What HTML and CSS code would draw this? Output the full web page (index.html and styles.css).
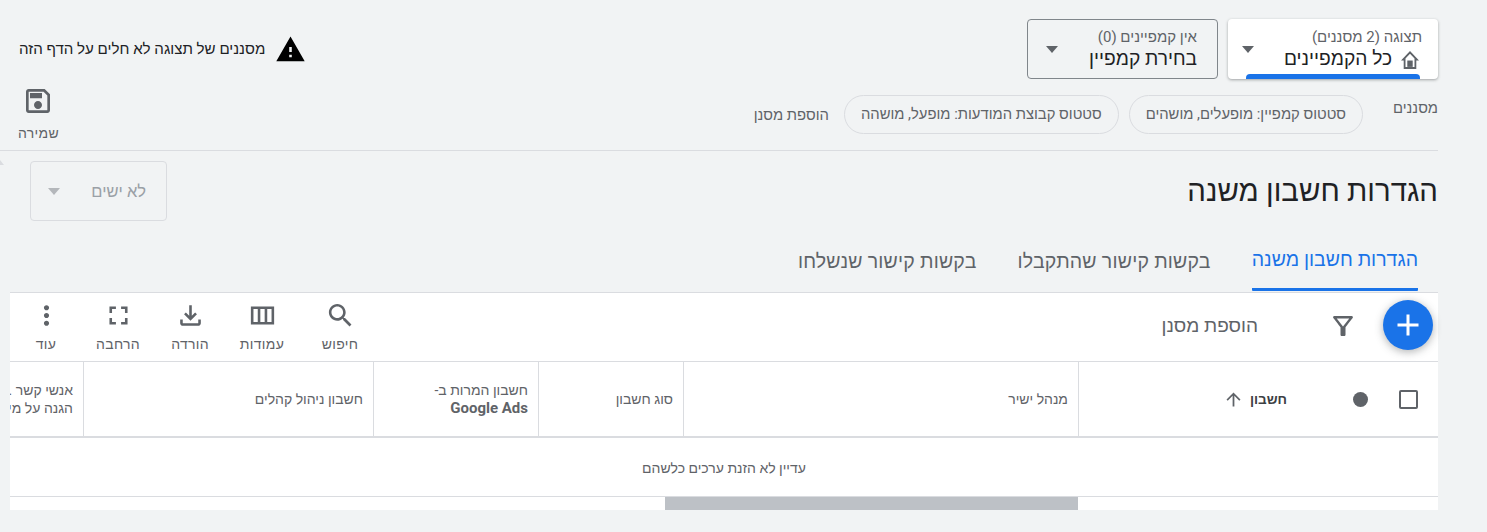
FILE: index.html
```html
<!DOCTYPE html>
<html lang="he" dir="rtl">
<head>
    <meta charset="UTF-8">
    <title>הגדרות חשבון משנה</title>
    <link rel="stylesheet" href="styles.css">
</head>
<body>
    <div class="page">
        <div class="picker-row">
            <div class="picker picker-active">
                <div class="picker-text">
                    <div class="picker-label">תצוגה (2 מסננים)</div>
                    <div class="picker-value">
                        <svg class="home-icon" viewBox="2 3 20 17" preserveAspectRatio="none"><path d="M12 3L2 12h3v8h14v-8h3L12 3zm5 15H7v-7.81l5-4.5 5 4.5V18z"/><rect x="9" y="12" width="6" height="6"/></svg>
                        כל הקמפיינים
                    </div>
                </div>
                <span class="caret"></span>
                <span class="picker-bar"></span>
            </div>
            <div class="picker picker-outline">
                <div class="picker-text">
                    <div class="picker-label">אין קמפיינים (0)</div>
                    <div class="picker-value">בחירת קמפיין</div>
                </div>
                <span class="caret"></span>
            </div>
            <div class="warning">
                <svg class="warning-icon" viewBox="0 0 24 24"><path d="M1 21h22L12 2 1 21zm12-3h-2v-2h2v2zm0-4h-2v-4h2v4z"/></svg>
                <span>מסננים של תצוגה לא חלים על הדף הזה</span>
            </div>
        </div>

        <div class="filter-row">
            <span class="filter-title">מסננים</span>
            <span class="chip">סטטוס קמפיין: מופעלים, מושהים</span>
            <span class="chip">סטטוס קבוצת המודעות: מופעל, מושהה</span>
            <span class="add-filter">הוספת מסנן</span>
            <div class="save">
                <svg class="save-icon" viewBox="0 0 24 24"><path d="M17 3H5c-1.11 0-2 .9-2 2v14c0 1.1.89 2 2 2h14c1.1 0 2-.9 2-2V7l-4-4zm2 16H5V5h11.17L19 7.83V19zm-7-7c-1.66 0-3 1.34-3 3s1.34 3 3 3 3-1.34 3-3-1.34-3-3-3zM6 6h9v4H6z"/></svg>
                <span>שמירה</span>
            </div>
        </div>

        <div class="title-row">
            <span class="corner"></span>
            <h1>הגדרות חשבון משנה</h1>
            <div class="na-select">
                <span>לא ישים</span>
                <span class="caret"></span>
            </div>
        </div>

        <div class="tabs">
            <span class="tab tab-active">הגדרות חשבון משנה</span>
            <span class="tab tab-wide">בקשות קישור שהתקבלו</span>
            <span class="tab tab-wide">בקשות קישור שנשלחו</span>
        </div>

        <div class="table-card">
            <div class="toolbar">
                <button class="fab"><svg viewBox="0 0 24 24"><path d="M19 13h-6v6h-2v-6H5v-2h6V5h2v6h6v2z"/></svg></button>
                <svg class="filter-icon" viewBox="0 0 24 24"><path d="M7 6h10l-5.01 6.3L7 6zm-2.75-.39C6.27 8.2 10 13 10 13v6c0 .55.45 1 1 1h2c.55 0 1-.45 1-1v-6s3.72-4.8 5.74-7.39C20.25 4.95 19.78 4 18.95 4H5.04c-.83 0-1.3.95-.79 1.61z"/></svg>
                <span class="toolbar-filter">הוספת מסנן</span>
                <div class="tools">
                    <div class="tool tool-search">
                        <svg class="icon" viewBox="0 0 24 24"><path d="M15.5 14h-.79l-.28-.27C15.41 12.59 16 11.11 16 9.5 16 5.91 13.09 3 9.5 3S3 5.91 3 9.5 5.91 16 9.5 16c1.61 0 3.09-.59 4.23-1.57l.27.28v.79l5 4.99L20.49 19l-4.99-5zm-6 0C7.01 14 5 11.99 5 9.5S7.01 5 9.5 5 14 7.01 14 9.5 11.99 14 9.5 14z"/></svg>
                        <span>חיפוש</span>
                    </div>
                    <div class="tool">
                        <svg class="icon" viewBox="0 0 24 24"><path d="M3 5v14h18V5H3zm5.33 12H5V7h3.33v10zm5.34 0h-3.34V7h3.34v10zM19 17h-3.33V7H19v10z"/></svg>
                        <span>עמודות</span>
                    </div>
                    <div class="tool">
                        <svg class="icon" viewBox="0 0 24 24"><path d="M18 15v3H6v-3H4v3c0 1.1.9 2 2 2h12c1.1 0 2-.9 2-2v-3h-2zm-1-4l-1.41-1.41L13 12.17V4h-2v8.17L8.41 9.59 7 11l5 5 5-5z"/></svg>
                        <span>הורדה</span>
                    </div>
                    <div class="tool">
                        <svg class="icon" viewBox="0 0 24 24"><path d="M7 14H5v5h5v-2H7v-3zm-2-4h2V7h3V5H5v5zm12 7h-3v2h5v-5h-2v3zM14 5v2h3v3h2V5h-5z"/></svg>
                        <span>הרחבה</span>
                    </div>
                    <div class="tool">
                        <svg class="icon" viewBox="0 0 24 24"><path d="M12 8c1.1 0 2-.9 2-2s-.9-2-2-2-2 .9-2 2 .9 2 2 2zm0 2c-1.1 0-2 .9-2 2s.9 2 2 2 2-.9 2-2-.9-2-2-2zm0 6c-1.1 0-2 .9-2 2s.9 2 2 2 2-.9 2-2-.9-2-2-2z"/></svg>
                        <span>עוד</span>
                    </div>
                </div>
            </div>

            <div class="table-head">
                <div class="cell cell-account">
                    <span class="checkbox"></span>
                    <span class="dot"></span>
                    <b class="account-name">חשבון</b>
                    <svg class="arrow" viewBox="0 0 24 24"><path d="M4 12l1.41 1.41L11 7.83V20h2V7.83l5.58 5.59L20 12l-8-8-8 8z"/></svg>
                </div>
                <div class="cell">מנהל ישיר</div>
                <div class="cell">סוג חשבון</div>
                <div class="cell cell-stack">
                    <span>חשבון המרות ב-</span>
                    <b class="cell-brand">Google Ads</b>
                </div>
                <div class="cell">חשבון ניהול קהלים</div>
                <div class="cell cell-stack cell-last">
                    <span>אנשי קשר .</span>
                    <span>הגנה על מידע</span>
                </div>
            </div>

            <div class="empty-row">עדיין לא הזנת ערכים כלשהם</div>
            <div class="scroll-track"><span class="scroll-thumb"></span></div>
        </div>
    </div>
</body>
</html>
```

FILE: styles.css
```css
html, body {
    margin: 0;
    height: 100%;
    overflow: hidden;
}
body {
    font-family: Roboto, "Liberation Sans", Arial, sans-serif;
    background-color: #f1f3f4;
    color: #5f6368;
}
.page {
    width: 1438px;
    margin-left: 0;
    margin-right: 49px;
}

/* top row */
.picker-row {
    display: flex;
    gap: 10px;
    align-items: stretch;
    padding-top: 19px;
    height: 60px;
}
.picker {
    position: relative;
    box-sizing: border-box;
    display: flex;
    justify-content: space-between;
    align-items: center;
    border-radius: 4px;
    overflow: hidden;
}
.picker-active {
    width: 210px;
    padding: 0 16px 0 14px;
    background-color: white;
    box-shadow: 0 1px 3px rgba(60, 64, 67, 0.45);
}
.picker-outline {
    width: 191px;
    padding: 0 20px 0 18px;
    border: 1px solid #80868b;
}
.picker-label {
    font-size: 15px;
    line-height: 18px;
    color: #5f6368;
}
.picker-value {
    display: flex;
    align-items: center;
    gap: 9px;
    font-size: 19.2px;
    line-height: 24px;
    color: #202124;
    margin-top: 1px;
}
.home-icon {
    width: 18px;
    height: 18px;
    margin-right: 3px;
    margin-top: 3px;
    fill: #5f6368;
}
.caret {
    width: 0;
    height: 0;
    border-left: 6.5px solid transparent;
    border-right: 6.5px solid transparent;
    border-top: 7px solid #5f6368;
}
.picker-bar {
    position: absolute;
    right: 18px;
    left: 18px;
    bottom: 0;
    height: 5px;
    border-radius: 4px 4px 0 0;
    background-color: #1a73e8;
}
.warning {
    display: flex;
    align-items: center;
    gap: 10px;
    margin-right: auto;
    margin-left: 19px;
    height: 60px;
    font-size: 15.1px;
    color: #202124;
}
.warning-icon {
    width: 31px;
    height: 31px;
    fill: #000;
}

/* filters */
.filter-row {
    display: flex;
    align-items: flex-start;
    height: 72px;
    box-sizing: border-box;
    border-bottom: 1px solid #dadce0;
    font-size: 14.8px;
}
.filter-title {
    margin-top: 20px;
    margin-left: 30px;
}
.chip {
    margin-top: 16px;
    margin-left: 10px;
    height: 39px;
    line-height: 37px;
    box-sizing: border-box;
    padding: 0 16px;
    border: 1px solid #dadce0;
    border-radius: 20px;
}
.add-filter {
    margin-top: 27px;
    margin-right: 5px;
}
.save {
    display: flex;
    flex-direction: column;
    align-items: center;
    margin-right: auto;
    margin-left: 18px;
    margin-top: 6px;
    font-size: 14px;
    letter-spacing: 0.3px;
}
.save span {
    margin-top: 8px;
}
.save-icon {
    width: 32px;
    height: 32px;
    fill: #5f6368;
    display: block;
}
.icon {
    width: 31px;
    height: 31px;
    fill: #5f6368;
    display: block;
}

/* title */
.title-row {
    position: relative;
    display: flex;
    justify-content: space-between;
    align-items: center;
    height: 60px;
    margin-top: 10px;
}
.title-row h1 {
    margin: 0;
    font-size: 29.4px;
    font-weight: 400;
    color: #202124;
}
.corner {
    position: absolute;
    left: 0;
    top: -1px;
    border-right: 4px solid transparent;
    border-bottom: 5px solid #dadce0;
}
.na-select {
    box-sizing: border-box;
    display: flex;
    justify-content: space-between;
    align-items: center;
    width: 137px;
    height: 60px;
    margin-left: 30px;
    padding: 0 20px 0 17px;
    border: 1px solid #dadce0;
    border-radius: 4px;
    font-size: 16.5px;
    color: #9aa0a6;
}
.na-select .caret {
    border-top-color: #b4b7bb;
}

/* tabs */
.tabs {
    display: flex;
    height: 60px;
    margin-top: 10px;
    padding-right: 20px;
    gap: 41px;
}
.tab {
    display: flex;
    align-items: center;
    padding-top: 1px;
    font-size: 19.5px;
    line-height: 58px;
    height: 60px;
    box-sizing: border-box;
    color: #5f6368;
}
.tab-wide {
    letter-spacing: 0.2px;
}
.tab-active {
    color: #1a73e8;
    border-bottom: 3px solid #1a73e8;
    border-radius: 0 0 1px 1px;
}

/* table */
.table-card {
    margin-left: 10px;
    margin-top: 1px;
    background-color: white;
    border-top: 1px solid #dadce0;
}
.toolbar {
    display: flex;
    align-items: flex-start;
    height: 69px;
    box-sizing: border-box;
    border-bottom: 1px solid #dadce0;
}
.fab {
    width: 50px;
    height: 50px;
    margin: 7px 5px 0 0;
    padding: 7px;
    border: none;
    border-radius: 50%;
    background-color: #1a73e8;
    box-shadow: 0 2px 8px rgba(60, 64, 67, 0.4);
}
.fab svg {
    display: block;
    fill: white;
}
.filter-icon {
    width: 30px;
    height: 30px;
    margin: 18px 25px 0 0;
    fill: #5f6368;
}
.toolbar-filter {
    margin: 21px 70px 0 0;
    font-size: 19px;
}
.tools {
    display: flex;
    margin-right: auto;
    padding-top: 7px;
}
.tool {
    display: flex;
    flex-direction: column;
    align-items: center;
    width: 72px;
    font-size: 14px;
    letter-spacing: 0.3px;
}
.tool-search {
    margin-left: 6px;
}
.tool span {
    margin-top: 5px;
}
.table-head {
    display: grid;
    grid-template-columns: 360px 395px 145px 165px 290px 73px;
    height: 76px;
    box-sizing: border-box;
    border-bottom: 2px solid #dadce0;
    font-size: 14px;
}
.cell {
    display: flex;
    align-items: center;
    padding: 0 10px;
    border-left: 1px solid #dadce0;
    overflow: hidden;
}
.cell-stack {
    flex-direction: column;
    align-items: flex-start;
    justify-content: center;
    line-height: 18px;
}
.cell-brand {
    font-size: 15px;
}
.cell-last {
    border-left: none;
    white-space: nowrap;
}
.cell-account {
    padding: 0 20px 0 0;
}
.checkbox {
    box-sizing: border-box;
    width: 19px;
    height: 19px;
    border: 2px solid #5f6368;
    border-radius: 2px;
}
.dot {
    width: 15px;
    height: 15px;
    margin-right: 31px;
    border-radius: 50%;
    background-color: #5f6368;
}
.account-name {
    margin-right: 66px;
    font-size: 13.5px;
    color: #3c4043;
}
.arrow {
    width: 21px;
    height: 21px;
    margin-right: 6px;
    fill: #5f6368;
}
.empty-row {
    height: 59px;
    line-height: 60px;
    box-sizing: border-box;
    border-bottom: 1px solid #dadce0;
    text-align: center;
    font-size: 14px;
}
.scroll-track {
    display: flex;
    height: 13px;
    padding-right: 360px;
}
.scroll-thumb {
    width: 413px;
    background-color: #bdc1c6;
}
```
